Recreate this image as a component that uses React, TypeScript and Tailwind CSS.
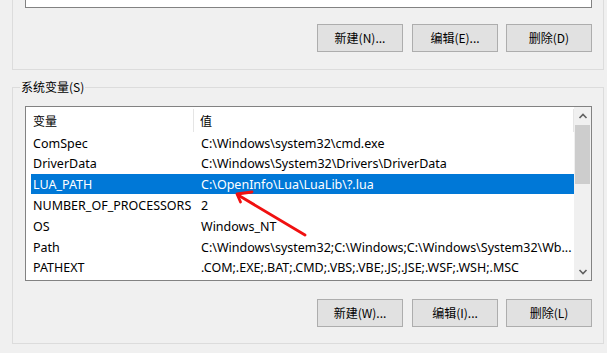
import React from "react";

const rows = [
  { name: "ComSpec", value: "C:\\Windows\\system32\\cmd.exe" },
  { name: "DriverData", value: "C:\\Windows\\System32\\Drivers\\DriverData" },
  { name: "LUA_PATH", value: "C:\\OpenInfo\\Lua\\LuaLib\\?.lua", selected: true },
  { name: "NUMBER_OF_PROCESSORS", value: "2" },
  { name: "OS", value: "Windows_NT" },
  { name: "Path", value: "C:\\Windows\\system32;C:\\Windows;C:\\Windows\\System32\\Wb..." },
  { name: "PATHEXT", value: ".COM;.EXE;.BAT;.CMD;.VBS;.VBE;.JS;.JSE;.WSF;.WSH;.MSC" },
];

const cjk = "font-['Noto_Sans_CJK_SC',sans-serif]";

const Button = ({ label, className = "" }: { label: string; className?: string }) => (
  <button
    className={`w-[86px] h-[28px] bg-[#e1e1e1] border border-[#adadad] text-[12px] text-black ${cjk} ${className}`}
  >
    {label}
  </button>
);

const Chevron = ({ up }: { up?: boolean }) => (
  <svg width="10" height="6" viewBox="0 0 10 6">
    <path
      d={up ? "M1.5 5 L5 1.5 L8.5 5" : "M1.5 1 L5 4.5 L8.5 1"}
      fill="none"
      stroke="#606060"
      strokeWidth="1.6"
    />
  </svg>
);

const App = () => {
  return (
    <div className="relative w-[607px] h-[353px] overflow-hidden bg-[#f0f0f0] font-['Noto_Sans','Noto_Sans_CJK_SC',sans-serif]">
      {/* user variables group (cut off at top) */}
      <div className="ml-[12px] w-[592px] h-[70px] border-x border-b border-[#dcdcdc]">
        <div className="ml-[12px] w-[567px] h-[8px] bg-white border-x border-b border-[#828282]" />
        <div className="mt-[16px] flex justify-end pr-[11px]">
          <Button label="新建(N)..." className="mr-[9px]" />
          <Button label="编辑(E)..." className="mr-[8px]" />
          <Button label="删除(D)" />
        </div>
      </div>

      {/* system variables */}
      <fieldset className="mt-[8px] ml-[12px] w-[592px] h-[266px] border border-[#dcdcdc]">
        <legend className={`ml-[7px] px-[1px] text-[12px] leading-[18px] text-black ${cjk}`}>
          系统变量(S)
        </legend>
        <div className="mt-[10px] ml-[12px] w-[567px] h-[175px] border border-[#828282] bg-white flex">
          <div className="flex-1 flex flex-col">
            <div className={`h-[25px] pt-[2px] flex items-center text-[12px] text-black ${cjk}`}>
              <div className="w-[168px] h-[23px] flex items-center pl-[7px] border-r border-[#e5e5e5]">
                变量
              </div>
              <div className="flex-1 h-[23px] flex items-center pl-[6px] border-r border-[#e5e5e5]">
                值
              </div>
            </div>
            {rows.map((r) => (
              <div
                key={r.name}
                className={`ml-[5px] h-[20.8px] pt-[3px] flex items-center text-[12.5px] whitespace-nowrap ${
                  r.selected ? "bg-[#0078d7] text-white" : "text-black"
                }`}
              >
                <div className="w-[170px] pl-[2px]">{r.name}</div>
                <div className="flex-1">{r.value}</div>
              </div>
            ))}
          </div>
          <div className="w-[17px] flex flex-col bg-[#f0f0f0]">
            <div className="h-[17px] flex items-center justify-center">
              <Chevron up />
            </div>
            <div className="mt-[1px] mx-[1px] h-[59px] bg-[#cdcdcd]" />
            <div className="flex-1" />
            <div className="h-[17px] flex items-center justify-center">
              <Chevron />
            </div>
          </div>
        </div>
        <div className="mt-[18px] flex justify-end pr-[11px]">
          <Button label="新建(W)..." className="mr-[9px]" />
          <Button label="编辑(I)..." className="mr-[8px]" />
          <Button label="删除(L)" />
        </div>
      </fieldset>

      {/* annotation arrow */}
      <svg
        className="absolute left-0 top-0 pointer-events-none"
        width="607"
        height="353"
        viewBox="0 0 607 353"
      >
        <g stroke="#f01010" strokeWidth="2.8" strokeLinecap="round" strokeLinejoin="round" fill="none">
          <path d="M305 235 L238 195" />
          <path d="M252 192 L237 194 L240.5 202" />
        </g>
      </svg>
    </div>
  );
};

export default App;
